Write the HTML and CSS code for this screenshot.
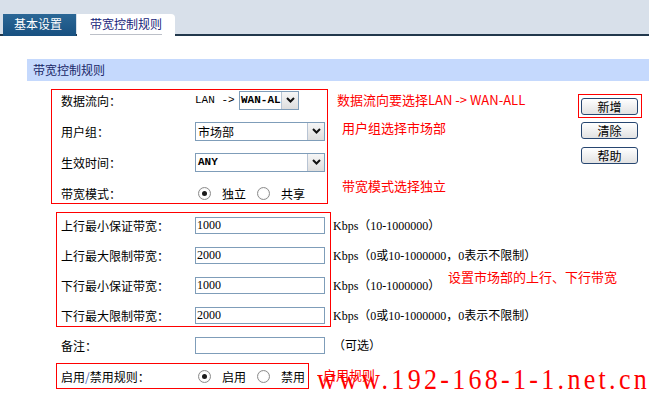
FILE: index.html
```html
<!DOCTYPE html>
<html lang="zh-CN">
<head>
    <meta charset="UTF-8">
    <title>带宽控制规则</title>
    <link rel="stylesheet" href="styles.css">
</head>
<body>

<div class="tabbar">
    <div class="tab tab-dark">基本设置</div>
    <div class="tab tab-active"><span>带宽控制规则</span></div>
</div>

<div class="content">
    <div class="section-title">带宽控制规则</div>

    <div class="panel">
        <form class="form">
            <div class="box box-a">
                <div class="row">
                    <div class="label">数据流向：</div>
                    <span class="lan">LAN -&gt;</span>
                    <div class="select select-small">
                        <span class="select-value">WAN-AL</span>
                        <span class="select-btn"><svg width="9" height="6" viewBox="0 0 9 6"><polyline points="1,1 4.5,4.5 8,1" fill="none" stroke="#111" stroke-width="2"/></svg></span>
                    </div>
                </div>
                <div class="row">
                    <div class="label">用户组：</div>
                    <div class="select">
                        <span class="select-value">市场部</span>
                        <span class="select-btn"><svg width="9" height="6" viewBox="0 0 9 6"><polyline points="1,1 4.5,4.5 8,1" fill="none" stroke="#111" stroke-width="2"/></svg></span>
                    </div>
                </div>
                <div class="row">
                    <div class="label">生效时间：</div>
                    <div class="select">
                        <span class="select-value latin">ANY</span>
                        <span class="select-btn"><svg width="9" height="6" viewBox="0 0 9 6"><polyline points="1,1 4.5,4.5 8,1" fill="none" stroke="#111" stroke-width="2"/></svg></span>
                    </div>
                </div>
                <div class="row">
                    <div class="label">带宽模式：</div>
                    <span class="radio checked"></span><span class="radio-text">独立</span>
                    <span class="radio"></span><span class="radio-text">共享</span>
                </div>
            </div>

            <div class="box box-b">
                <div class="row">
                    <div class="label">上行最小保证带宽：</div>
                    <input class="field" type="text" value="1000">
                    <span class="note">Kbps（10-1000000）</span>
                </div>
                <div class="row">
                    <div class="label">上行最大限制带宽：</div>
                    <input class="field" type="text" value="2000">
                    <span class="note">Kbps（0或10-1000000，0表示不限制）</span>
                </div>
                <div class="row">
                    <div class="label">下行最小保证带宽：</div>
                    <input class="field" type="text" value="1000">
                    <span class="note">Kbps（10-1000000）</span>
                </div>
                <div class="row">
                    <div class="label">下行最大限制带宽：</div>
                    <input class="field" type="text" value="2000">
                    <span class="note">Kbps（0或10-1000000，0表示不限制）</span>
                </div>
            </div>

            <div class="row row-plain">
                <div class="label">备注：</div>
                <input class="field" type="text" value="">
                <span class="note">（可选）</span>
            </div>

            <div class="box box-c">
                <div class="row">
                    <div class="label">启用<span class="slash">/</span>禁用规则：</div>
                    <span class="radio checked"></span><span class="radio-text">启用</span>
                    <span class="radio"></span><span class="radio-text">禁用</span>
                </div>
            </div>
        </form>

        <div class="buttons">
            <div class="btn-mark"><button class="btn" type="button">新增</button></div>
            <button class="btn" type="button">清除</button>
            <button class="btn" type="button">帮助</button>
        </div>

        <!-- callouts drawn over the form -->
        <div class="tip tip-flow">数据流向要选择LAN -&gt; WAN-ALL</div>
        <div class="tip tip-group">用户组选择市场部</div>
        <div class="tip tip-mode">带宽模式选择独立</div>
        <div class="tip tip-rate">设置市场部的上行、下行带宽</div>
        <div class="tip tip-rule">启用规则</div>
        <div class="watermark">www.192-168-1-1.net.cn</div>
    </div>
</div>

</body>
</html>
```

FILE: styles.css
```css
body {
    margin: 0;
    font-family: "Noto Sans CJK SC", "Liberation Sans", sans-serif;
    font-size: 12px;
    color: #000;
    background-color: #ffffff;
}

/* top tab strip */
.tabbar {
    height: 34px;
    background-color: #d8e0ea;
    border-bottom: 2px solid #22384c;
    display: flex;
    align-items: flex-end;
    padding-left: 3px;
}
.tab {
    height: 22px;
    margin-bottom: -2px;
    box-sizing: border-box;
    line-height: 19px;
}
.tab-dark {
    width: 73px;
    padding-left: 11px;
    color: #ffffff;
    background: linear-gradient(#2b6796, #175080);
}
.tab-active {
    width: 98px;
    margin-left: 1px;
    padding-left: 13px;
    background-color: #ffffff;
    border-top-right-radius: 4px;
    color: #17257a;
}
.tab-active span {
    display: inline-block;
    padding-bottom: 1px;
    border-bottom: 1px solid #bcc0c8;
}

.content {
    margin-top: 23px;
    padding-left: 27px;
}
.section-title {
    height: 22px;
    line-height: 21px;
    padding-left: 6px;
    background-color: #c5d9fd;
    color: #1a2868;
}

.panel {
    position: relative;
    display: flex;
    padding-top: 8px;
}
.form {
    margin: 0 0 0 24px;
    width: 281px;
}

.box {
    border: 1px solid #ff0000;
    box-sizing: border-box;
    display: flex;
    flex-direction: column;
}
.box-a {
    width: 277px;
    padding: 0 0 0 9px;
    gap: 11px;
}
.box-b {
    width: 275px;
    margin: 8px 0 0 5px;
    padding: 2px 0 1px 4px;
    gap: 10px;
}
.box-c {
    width: 253px;
    margin: 8px 0 0 5px;
    padding: 2px 0 2px 4px;
}

.row {
    display: flex;
    align-items: center;
    height: 20px;
    white-space: nowrap;
}
.row-plain {
    margin-top: 8px;
    padding-left: 10px;
}
.label {
    width: 134px;
    flex-shrink: 0;
}
.slash {
    color: #4a6cc0;
}

.lan {
    width: 44px;
    font-family: "Liberation Mono", monospace;
    font-size: 11px;
}

.select {
    width: 130px;
    height: 19px;
    border: 1px solid #7f9db9;
    box-sizing: border-box;
    display: flex;
    background-color: #ffffff;
}
.select-small {
    width: 60px;
}
.select-value {
    flex: 1;
    padding-left: 2px;
    line-height: 17px;
    overflow: hidden;
}
.latin,
.select-small .select-value {
    font-family: "Liberation Mono", monospace;
    font-size: 11px;
    font-weight: bold;
}
.select-small .select-value {
    padding-left: 1px;
}
.select-btn {
    width: 17px;
    flex-shrink: 0;
    box-sizing: border-box;
    border-left: 1px solid #b8c4d4;
    background: linear-gradient(#f6f6f6, #dedede);
    display: flex;
    align-items: center;
    justify-content: center;
}

.field {
    width: 130px;
    height: 17px;
    margin: 0;
    padding: 0 1px;
    border: 1px solid #7f9db9;
    box-sizing: border-box;
    font-family: "Liberation Serif", serif;
    font-size: 12px;
}
.note {
    margin-left: 8px;
    font-family: "Liberation Serif", "Noto Sans CJK SC", serif;
}

.radio {
    width: 13px;
    height: 13px;
    margin-left: 11px;
    border: 1px solid #8c8c8c;
    border-radius: 50%;
    box-sizing: border-box;
    background: radial-gradient(#ffffff 50%, #e6e6e6);
    display: flex;
    align-items: center;
    justify-content: center;
}
.label + .radio {
    margin-left: 3px;
}
.radio.checked::after {
    content: "";
    width: 5px;
    height: 5px;
    border-radius: 50%;
    background-color: #1a1a1a;
}
.radio-text {
    margin-left: 11px;
}

/* buttons on the right */
.buttons {
    margin: 5px 7px 0 auto;
    display: flex;
    flex-direction: column;
    gap: 8px;
}
.btn-mark {
    border: 1px solid #ff0000;
    padding: 3px 3px 2px 2px;
    margin-bottom: -4px;
}
.btn {
    width: 57px;
    height: 17px;
    padding: 0;
    border: 1px solid #274670;
    border-radius: 3px;
    background: linear-gradient(#ffffff, #e2e2e2);
    font-family: "Noto Sans CJK SC", sans-serif;
    font-size: 12px;
    line-height: 15px;
    color: #000;
}
.buttons > .btn {
    margin-left: 3px;
}

/* red callouts */
.tip {
    position: absolute;
    color: #ff0000;
    font-size: 13px;
    line-height: 16px;
    white-space: nowrap;
}
.tip-flow { left: 310px; top: 11px; }
.tip-group { left: 315px; top: 39px; }
.tip-mode { left: 315px; top: 97px; }
.tip-rate { left: 421px; top: 188px; }
.tip-rule { left: 296px; top: 286px; }

.watermark {
    position: absolute;
    left: 290px;
    top: 284px;
    font-family: "Liberation Serif", serif;
    font-size: 26px;
    letter-spacing: 3.3px;
    line-height: 30px;
    color: #ff0000;
    transform: scaleY(1.15);
    white-space: nowrap;
}
```
